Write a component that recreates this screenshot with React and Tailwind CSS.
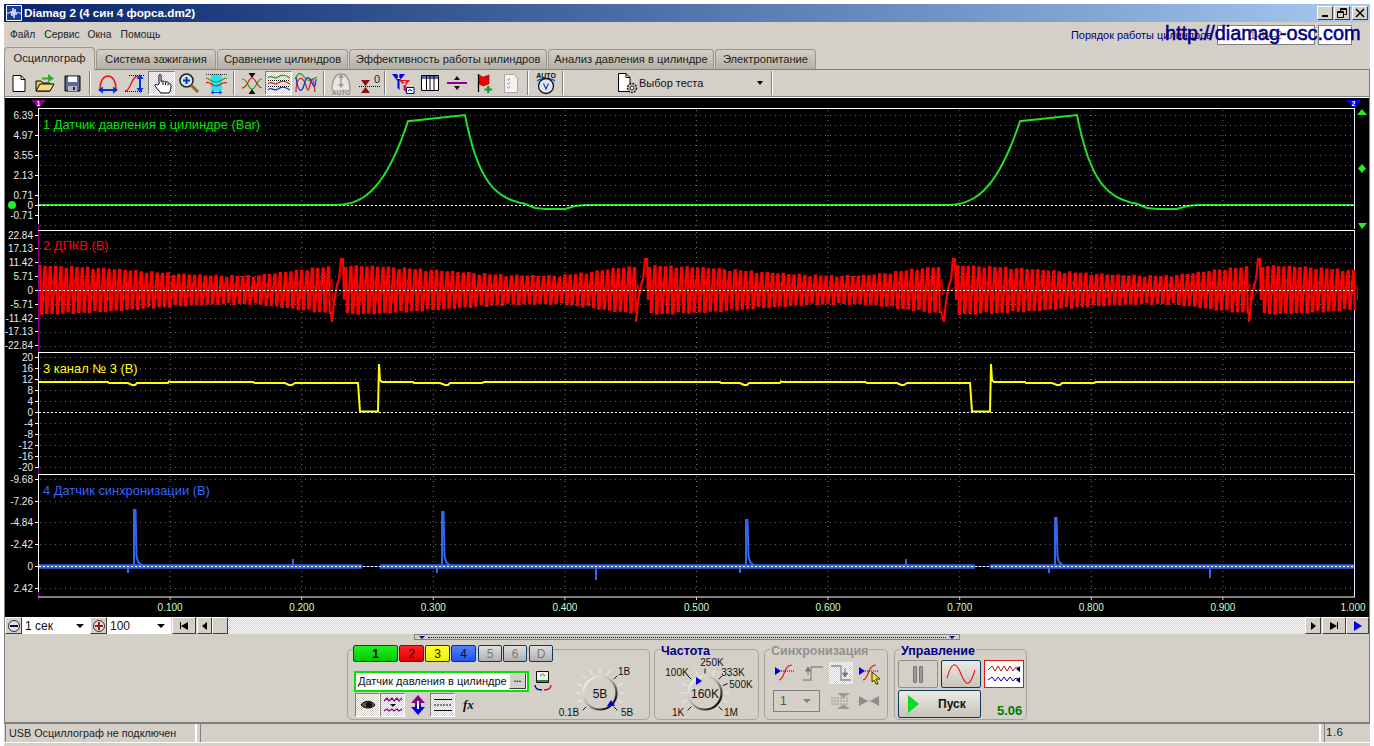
import clsx from 'clsx'

const raised = 'border border-t-white border-l-white border-r-[#404040] border-b-[#404040] bg-[#d4d0c8]'
const pressedBg = 'border border-t-[#808080] border-l-[#808080] border-r-white border-b-white bg-[repeating-conic-gradient(#ffffff_0_25%,#d4d0c8_0_50%)] bg-[length:2px_2px]'
const dither = 'bg-[repeating-conic-gradient(#ffffff_0_25%,#d4d0c8_0_50%)] bg-[length:2px_2px]'

const tabs = [
  { label: 'Осциллограф', w: 'w-[91px]', active: true },
  { label: 'Система зажигания', w: 'w-[120px]' },
  { label: 'Сравнение цилиндров', w: 'w-[131px]' },
  { label: 'Эффективность работы цилиндров', w: 'w-[198px]' },
  { label: 'Анализ давления в цилиндре', w: 'w-[166px]' },
  { label: 'Электропитание', w: 'w-[101px]' },
]

const range = (from, to, step) => {
  const out = []
  for (let v = from; v <= to + 0.01; v += step) out.push(v)
  return out
}

const panels = [
  {
    top: 108, bottom: 229, zero: 205, rows: range(115, 225, 10), color: '#00e600', title: '1 Датчик давления в цилиндре (Bar)', titleY: 129, axis: '#ffffff',
    ticks: [['6.39', 115], ['4.97', 135], ['3.55', 155], ['2.13', 175], ['0.71', 195], ['0', 205], ['-0.71', 215]],
  },
  {
    top: 230, bottom: 351, zero: 290, rows: range(234, 346, 14), color: '#ff0000', title: '2 ДПКВ (В)', titleY: 250, axis: '#8b008b',
    ticks: [['22.84', 235], ['17.13', 248], ['11.42', 262], ['5.71', 276], ['0', 290], ['-5.71', 304], ['-11.42', 318], ['-17.13', 331], ['-22.84', 345]],
  },
  {
    top: 352, bottom: 473, zero: 412, rows: range(357, 467, 11), color: '#ffff00', title: '3 канал № 3 (В)', titleY: 373, axis: '#ffffff',
    ticks: [['20', 357], ['16', 368], ['12', 379], ['8', 390], ['4', 401], ['0', 412], ['-4', 423], ['-8', 434], ['-12', 445], ['-16', 456], ['-20', 467]],
  },
  {
    top: 474, bottom: 597, zero: 566, rows: [479, 501, 522, 544, 588], color: '#3366ff', title: '4 Датчик синхронизации (В)', titleY: 495, axis: '#ffffff',
    ticks: [['-9.68', 479], ['-7.26', 501], ['-4.84', 522], ['-2.42', 544], ['0', 566], ['2.42', 588]],
  },
]

const gridX = range(0.1, 0.91, 0.1).map((t) => 38.5 + t * 1316)

// one compression hump, shifted by dx
function hump(dx) {
  const pts = []
  for (let x = 330; x <= 410; x += 3) pts.push([x + dx, 205 - 90 * ((x - 330) / 80) ** 2.8])
  pts.push([465 + dx, 115])
  for (let x = 467; x <= 525; x += 3) pts.push([x + dx, 115 + 92 * (1 - Math.exp(-(x - 465) / 18))])
  pts.push([535 + dx, 208], [545 + dx, 209], [565 + dx, 209], [575 + dx, 206], [585 + dx, 205])
  return pts
}
const pressurePts = [[39, 205], ...hump(0), ...hump(612), [1354, 205]].map(([a, b]) => `${a},${b.toFixed(1)}`).join(' ')

function buildCrank() {
  const events = [33, 338, 642, 950, 1255, 1560]
  const pts = []
  const inner = []
  let x = 39
  let i = 0
  while (x < 1354) {
    const next = events.find((e) => e > x)
    const prev = events[events.indexOf(next) - 1]
    if (next - x < 8) {
      pts.push([next - 6, 322], [next - 4, 302], [next - 1, 285], [next + 1, 280], [next + 3, 259], [next + 5, 259], [next + 6, 300])
      x = next + 7
      continue
    }
    const p = (x - prev) / 305
    let amp = p < 0.68 ? 13 + 10 * Math.cos((p / 0.68) * Math.PI / 2) ** 2 : 13 + 9 * Math.sin(((p - 0.68) / 0.32) * Math.PI / 2) ** 2
    amp += i % 3 === 0 ? 0.8 : i % 5 === 0 ? -1.2 : 0
    pts.push([x, 290 - amp], [x + 1.2, 290 - amp], [x + 1.8, 290 + amp], [x + 3, 290 + amp])
    inner.push([x + 4, 290 - amp * (i % 2 ? 0.25 : 0.5)], [x + 4.6, 290 + amp * (i % 3 ? 0.2 : 0.5)])
    x += 5.35
    i += 1
  }
  const fmt = (list) => list.map(([a, b]) => `${a.toFixed(1)},${b.toFixed(1)}`).join(' ')
  return { main: fmt(pts), inner: fmt(inner) }
}
const crank = buildCrank()

const supply = (dx) => [[dx + 108, 382], [dx + 109, 383], [dx + 128, 383], [dx + 132, 385], [dx + 135, 385], [dx + 137, 383], [dx + 168, 383], [dx + 169, 381.5], [dx + 171, 382], [dx + 253, 382], [dx + 255, 383], [dx + 285, 383], [dx + 289, 385], [dx + 292, 385], [dx + 295, 383], [dx + 358, 383], [dx + 360, 411.5], [dx + 378, 411.5], [dx + 379, 364], [dx + 380, 380], [dx + 382, 382], [dx + 413, 382], [dx + 414, 383], [dx + 440, 383], [dx + 445, 385], [dx + 448, 385], [dx + 450, 383], [dx + 482, 383], [dx + 484, 382]]
const supplyPts = [[39, 382], ...supply(0), ...supply(612).filter(([x]) => x < 1354), [1354, 382]].map((p) => p.join(',')).join(' ')

const spikes = [
  [135, 510], [443, 512], [747, 520], [1056, 518],
]
const smalls = [[128, 573], [437, 573], [596, 580], [740, 573], [1049, 573], [1210, 578], [293, 559], [906, 559]]

function Scope() {
  const cls = "font-['Liberation_Sans',sans-serif]"
  return (
    <svg width="1364" height="519" viewBox="5 98 1364 519" className={clsx('block bg-black', cls)}>
      {panels.map((pn) => (
        <g key={pn.title}>
          {pn.rows.map((y) => (
            <line key={y} x1="40" x2="1352" y1={y + 0.5} y2={y + 0.5} stroke="#666" strokeDasharray="1 4" />
          ))}
          {gridX.map((x) => (
            <line key={x} x1={x} x2={x} y1={pn.top + 2} y2={pn.bottom - 1} stroke="#777" strokeDasharray="1 4" />
          ))}
          {pn.ticks.map(([label, y]) => (
            <g key={label}>
              <line x1="35" x2="38" y1={y + 0.5} y2={y + 0.5} stroke="#fff" />
              <text x="33" y={y + 4} fontSize="10" fill="#e8e8e8" textAnchor="end">{label}</text>
            </g>
          ))}
          <line x1="38.5" x2="38.5" y1={pn.top} y2={pn.bottom} stroke={pn.axis} />
          <line x1="38.5" x2="38.5" y1={pn.bottom - 5} y2={pn.bottom + 2} stroke="#8b008b" />
          <line x1="1354.5" x2="1354.5" y1={pn.top} y2={pn.bottom} stroke="#e8e8ff" />
          <line x1="38" x2="1355" y1={pn.top + 0.5} y2={pn.top + 0.5} stroke="#fff" />
          <text x="43" y={pn.titleY} fontSize="12.9" fill={pn.color}>{pn.title}</text>
        </g>
      ))}
      <line x1="38" x2="1355" y1="597" y2="597" stroke="#fff" />

      <polyline points={pressurePts} fill="none" stroke="#22e022" strokeWidth="2" />
      <polyline points={crank.inner} fill="none" stroke="#ff0000" strokeWidth="1" />
      <polyline points={crank.main} fill="none" stroke="#ff0000" strokeWidth="2.2" />
      <polyline points={supplyPts} fill="none" stroke="#ffff00" strokeWidth="2" />

      <g stroke="#3366ee" fill="none">
        <path d="M39 566.5H362M380 566.5H975M990 566.5H1354" strokeWidth="4.5" />
        <path d="M362 566.5H380M975 566.5H990" strokeWidth="1" />
        {spikes.map(([x, y]) => (
          <path key={x} d={`M${x - 1} 566V${y}H${x + 0.5}L${x + 1.5} 556L${x + 3} 562L${x + 8} 566`} strokeWidth="2" />
        ))}
        {smalls.map(([x, y]) => (
          <path key={x} d={`M${x} 566V${y}`} strokeWidth="2" />
        ))}
      </g>

      {panels.map((pn) => (
        <line key={pn.zero} x1="39" x2="1354" y1={pn.zero + 0.5} y2={pn.zero + 0.5} stroke="#fff" strokeDasharray="2 2" />
      ))}

      {gridX.map((x, i) => (
        <g key={x}>
          <line x1={x} x2={x} y1="597" y2="600" stroke="#ccc" />
          <text x={x} y="611" fontSize="10" fill="#ccffcc" textAnchor="middle">{`0.${i + 1}00`}</text>
        </g>
      ))}
      <text x="1353" y="611" fontSize="10" fill="#ccffcc" textAnchor="middle">1.000</text>

      <path d="M31 100H46L39 108Z" fill="#8b008b" />
      <text x="38.5" y="105.5" fontSize="7" fontWeight="bold" fill="#fff" textAnchor="middle">1</text>
      <path d="M1346 100H1361L1354 108Z" fill="#0000ee" />
      <text x="1353.5" y="105.5" fontSize="7" fontWeight="bold" fill="#fff" textAnchor="middle">2</text>
      <circle cx="12" cy="205" r="4" fill="#22ee22" />
      <path d="M1357 115L1362 109L1367 115Z" fill="#22ee22" />
      <path d="M1362 164L1366 168.500L1362 173L1358 168.500Z" fill="#22ee22" />
      <path d="M1358 223H1367L1362 229Z" fill="#22ee22" />
    </svg>
  )
}

function Ico({ children, w = 24, h = 24 }) {
  return <svg width={w} height={h} viewBox={`0 0 ${w} ${h}`} fill="none">{children}</svg>
}

const IconNew = () => <Ico><path d="M7 4.500H15L19 8.500V20.500H7Z" fill="#fff" stroke="#000" /><path d="M15 4.500V8.500H19" stroke="#000" /></Ico>
const IconOpen = () => <Ico><path d="M3 10H8L10 12H17V20H3Z" fill="#e8c84a" stroke="#000" /><path d="M3 20L7 13H21L17 20Z" fill="#f5de7a" stroke="#000" /><path d="M15 3L21 7.500L15 11Z" fill="#2ea82e" /><path d="M9 7.500H15" stroke="#2ea82e" strokeWidth="2" /></Ico>
const IconSave = () => <Ico><path d="M5 5H20V20H5Z" fill="#5b6c9a" stroke="#000" /><path d="M8 5.500H17V11H8Z" fill="#fff" /><path d="M8 15H17V20H8Z" fill="#b9b9b9" /><path d="M13 16H15V19H13Z" fill="#222" /></Ico>
const IconSpread = () => <Ico><path d="M4 19C4 9 8 5 12 5S20 9 20 19" stroke="#ee1111" strokeWidth="1.500" /><path d="M4 19H20" stroke="#0033dd" strokeWidth="2" /><path d="M2 19L7 15.500V22.500ZM22 19L17 15.500V22.500Z" fill="#0033dd" /></Ico>
const IconStretch = () => <Ico><path d="M2 20C8 20 8 5 15 5" stroke="#ee1111" strokeWidth="1.300" /><path d="M6 4.500H22M2 20.500H20" stroke="#000" strokeDasharray="1 1" /><path d="M17 6V19" stroke="#0033dd" strokeWidth="2" /><path d="M17 3L13.500 8H20.500ZM17 22L13.500 17H20.500Z" fill="#0033dd" /></Ico>
const IconHand = () => <Ico><path d="M9 13V4.500C9 3 11 3 11 4.500V10.500L13 10C14 10 15 10.500 15 11L17 11C18 11 19 12 19 12.500L20.500 13C21.500 14 21 20 19 22H11C9 20 5.500 16 5 14.500C5 13 6.500 13 7.500 14Z" fill="#fff" stroke="#000" /><path d="M13 11V14M15.500 11.500V14M18 12.500V14.500" stroke="#000" /></Ico>
const IconZoom = () => <Ico><circle cx="9.500" cy="9.500" r="6.500" fill="#d6e6fa" stroke="#222" strokeWidth="1.500" /><path d="M14 14L21 21" stroke="#8a6a2a" strokeWidth="3" /><path d="M6 9.500H13M9.500 6V13" stroke="#0033cc" strokeWidth="2" /></Ico>
const IconZoomWave = () => <Ico><path d="M7 3H18V20H7Z" fill="#22e6ee" /><path d="M2 7C6 7 6 11 12 11S18 7 23 7" stroke="#17a017" strokeWidth="1.200" /><path d="M2 12C6 9 7 15 12 15S18 10 23 12" stroke="#ee1111" strokeWidth="1.200" /><path d="M2 3.500H23" stroke="#222" strokeDasharray="1 1" /><path d="M7 21.500H18" stroke="#0033dd" /><path d="M7 21.500L9.500 19.500V23.500ZM18 21.500L15.500 19.500V23.500Z" fill="#0033dd" /></Ico>
const IconCross = () => <Ico><path d="M2 8C8 8 8 18 12 18S17 8 22 8" stroke="#17a017" strokeWidth="1.200" /><path d="M2 17C8 17 8 7 12 7S17 17 22 17" stroke="#ee1111" strokeWidth="1.200" /><path d="M12 7L8.500 2H15.500ZM12 18L8.500 23H15.500Z" fill="#111" /></Ico>
const IconStack = () => <Ico><path d="M1 7C4 3 7 9 11 6S18 4 23 7" stroke="#17a017" strokeWidth="1.200" /><path d="M1 13C4 9 7 15 11 12S18 10 23 13" stroke="#ee1111" strokeWidth="1.200" /><path d="M1 19C4 15 7 21 11 18S18 16 23 19" stroke="#0033dd" strokeWidth="1.200" /><path d="M1 9.500H23M1 15.500H23" stroke="#000" strokeDasharray="1 1" /></Ico>
const IconOverlap = () => <Ico><path d="M1 8C5 0 7 2 11 7S18 8 23 6" stroke="#17a017" strokeWidth="1.200" /><path d="M2 21C2 6 8 4 11 12S14 22 16 14 19 4 21 21" stroke="#ee1111" strokeWidth="1.200" /><path d="M2 6C4 22 8 22 10 14S14 4 17 10 21 20 22 8" stroke="#0033dd" strokeWidth="1.200" /></Ico>
const IconAutoDome = () => <Ico><path d="M3 20C3 8 7 3 12 3S21 8 21 20" fill="#e8e5de" stroke="#9a9a9a" strokeWidth="1.300" /><path d="M12 5V15" stroke="#9a9a9a" strokeWidth="1.500" /><path d="M12 3L9 7H15ZM12 17L9 13H15Z" fill="#9a9a9a" /><text x="12" y="23.500" fontSize="6.500" fontWeight="bold" fill="#8a8a8a" textAnchor="middle">AUTO</text></Ico>
const IconZero = () => <Ico><path d="M3 15.500H25" stroke="#000" strokeDasharray="1 1" /><path d="M5 9H14L9.500 15ZM5 22H14L9.500 16Z" fill="#8b1010" /><text x="18" y="12" fontSize="11" fill="#222">0</text></Ico>
const IconFilter = () => <Ico><path d="M1 3H14L8.500 10V19L6.500 17V10Z" fill="#0000dd" /><path d="M8 9H19L15 14V21L12.500 19V14Z" fill="#ee1111" /><text x="7.500" y="8" fontSize="7" fontWeight="bold" fill="#fff" textAnchor="middle">1</text><text x="13.500" y="14" fontSize="6" fontWeight="bold" fill="#fff" textAnchor="middle">2</text><path d="M15.500 16.500H23V22.500H15.500Z" fill="#fff" stroke="#0000aa" /><path d="M17 20L19 18.500L21 20" stroke="#0000aa" /></Ico>
const IconTable = () => <Ico><path d="M3.500 4.500H20.500V19.500H3.500Z" fill="#fff" stroke="#000" /><path d="M4 5H20V8H4Z" fill="#5b6ca8" /><path d="M8.500 5V19M12 5V19M16 5V19" stroke="#000" /></Ico>
const IconDivider = () => <Ico><path d="M2 12H22" stroke="#8b008b" strokeWidth="2" /><path d="M12 5L9 9H15ZM12 19L9 15H15Z" fill="#111" /></Ico>
const IconFlag = () => <Ico><path d="M6.500 3V21" stroke="#000" strokeWidth="1.300" /><path d="M7 4L11 6L17 4V13L11 15L7 13Z" fill="#ee0000" stroke="#700" strokeWidth="0.500" /><path d="M12.500 18.500H20M16.250 15V22" stroke="#0a9a2a" strokeWidth="2.200" /></Ico>
const IconChecklist = () => <Ico><path d="M5.500 3.500H15L18.500 7V21.500H5.500Z" fill="#f3f2ee" stroke="#a8a8a8" /><path d="M8 8L9.500 9.500L11 7M8 12L9.500 13.500L11 11M8 16L9.500 17.500L11 15" stroke="#9a9a9a" /></Ico>
const IconAutoGauge = () => <Ico><text x="12" y="6.500" fontSize="7" fontWeight="bold" fill="#111" textAnchor="middle">AUTO</text><path d="M3 10C7 6.500 17 6.500 21 10" stroke="#0066dd" strokeWidth="1.500" /><circle cx="12" cy="15" r="7.500" fill="#dfe6ef" stroke="#111" strokeWidth="1.300" /><path d="M9.500 12.500L12 18L14.500 12.500" stroke="#0033cc" strokeWidth="1.100" /></Ico>
const IconTest = () => (
  <Ico w={26} h={24}>
    <path d="M3.500 2.500H11L15 6.500V20.500H3.500Z" fill="#fff" stroke="#000" />
    <path d="M11 2.500V6.500H15" stroke="#000" />
    <circle cx="17" cy="17" r="4.500" fill="#d4d0c8" stroke="#111" strokeWidth="1.500" strokeDasharray="2 1" />
    <circle cx="17" cy="17" r="2" fill="#fff" stroke="#111" />
  </Ico>
)

function Tb({ icon: I, pressed }) {
  return (
    <div className={clsx('w-[27px] h-[24px] flex items-center justify-center', pressed && pressedBg)}>
      <I />
    </div>
  )
}

const Sep = ({ cls }) => <div className={clsx('w-[2px] h-[24px] border-l border-l-[#808080] border-r border-r-white', cls)} />

function Toolbar() {
  return (
    <div className="flex items-center h-[27px] border-b border-b-[#808080] pl-0 -ml-[1px]">
      <Tb icon={IconNew} />
      <Tb icon={IconOpen} />
      <Tb icon={IconSave} />
      <Sep cls="ml-[4px] mr-[3px]" />
      <Tb icon={IconSpread} />
      <Tb icon={IconStretch} />
      <Tb icon={IconHand} pressed />
      <Tb icon={IconZoom} />
      <Tb icon={IconZoomWave} />
      <Sep cls="ml-[4px] mr-[3px]" />
      <Tb icon={IconCross} />
      <Tb icon={IconStack} pressed />
      <Tb icon={IconOverlap} />
      <Sep cls="ml-[4px] mr-[2px]" />
      <Tb icon={IconAutoDome} />
      <Tb icon={IconZero} />
      <Sep cls="ml-[3px] mr-[3px]" />
      <Tb icon={IconFilter} />
      <Tb icon={IconTable} />
      <Tb icon={IconDivider} />
      <Tb icon={IconFlag} />
      <Tb icon={IconChecklist} />
      <Sep cls="ml-[3px] mr-[3px]" />
      <Tb icon={IconAutoGauge} />
      <Sep cls="ml-[3px]" />
      <div className="w-[207px] h-[24px] flex items-center pl-[51px] pr-[8px] text-[11px] text-[#111]">
        <IconTest />
        <span className="-ml-[2px]">Выбор теста</span>
        <span className="ml-auto w-0 h-0 border-x-[3.5px] border-x-transparent border-t-[4px] border-t-black" />
      </div>
      <Sep />
    </div>
  )
}

const Arrow = ({ dir = 'r', cls = 'border-l-black', size = 'border-y-[4px] border-l-[5px]' }) => (
  <span className={clsx('w-0 h-0 border-y-transparent', size, cls, dir === 'l' && 'rotate-180')} />
)

function Combo({ w, text }) {
  return (
    <div className={clsx('h-[17px] bg-white flex items-center pl-[3px] pr-[6px] text-[12px] text-[#111]', w)}>
      <span>{text}</span>
      <span className="ml-auto w-0 h-0 border-x-[4px] border-x-transparent border-t-[4px] border-t-black" />
    </div>
  )
}

function RoundBtn({ sign }) {
  return (
    <div className={clsx('w-[17px] h-[17px] flex items-center justify-center', raised)}>
      <span className="w-[12px] h-[12px] rounded-full border border-[#333] bg-[#e4e0d8] flex items-center justify-center relative">
        <span className={clsx('absolute w-[8px] h-[2px]', sign === '+' ? 'bg-[#a01818]' : 'bg-[#000080]')} />
        {sign === '+' && <span className="absolute w-[2px] h-[8px] bg-[#a01818]" />}
      </span>
    </div>
  )
}

function ScrollRow() {
  return (
    <div className="flex h-[17px]">
      <RoundBtn sign="-" />
      <Combo w="w-[68px]" text="1 сек" />
      <RoundBtn sign="+" />
      <Combo w="w-[64px]" text="100" />
      <div className={clsx('ml-[1px] w-[24px] flex items-center justify-center', raised)}>
        <span className="w-[1px] h-[7px] bg-black" />
        <Arrow dir="l" size="border-y-[4px] border-l-[7px]" />
      </div>
      <div className={clsx('ml-[1px] w-[15px] flex items-center justify-center', raised)}><Arrow dir="l" /></div>
      <div className={clsx('w-[16px]', raised)} />
      <div className={clsx('flex-1', dither)} />
      <div className={clsx('w-[16px] flex items-center justify-center', raised)}><Arrow /></div>
      <div className={clsx('ml-[1px] w-[24px] flex items-center justify-center', raised)}>
        <Arrow size="border-y-[4px] border-l-[7px]" />
        <span className="w-[1px] h-[7px] bg-black" />
      </div>
      <div className={clsx('w-[23px] flex items-center justify-center border-l border-l-[#000080]', raised)}>
        <Arrow cls="border-l-[#0000ee]" size="border-y-[5px] border-l-[8px]" />
      </div>
    </div>
  )
}

function Knob({ id, cx, cy, w, h, labels, marker, value, dark }) {
  const r = 16.5
  const ticks = range(-225, 45, 22.5)
  return (
    <svg width={w} height={h} viewBox={`0 0 ${w} ${h}`} className="font-['Liberation_Sans',sans-serif] shrink-0">
      <defs>
        <linearGradient id={id} x1="0" y1="0" x2="1" y2="1">
          <stop offset="0.1" stopColor="#f4f4f4" />
          <stop offset="0.5" stopColor="#aaa" />
          <stop offset="0.85" stopColor="#111" />
        </linearGradient>
      </defs>
      {ticks.map((a) => {
        const rad = (a * Math.PI) / 180
        const bold = dark.includes(a)
        return (
          <line
            key={a}
            x1={cx + Math.cos(rad) * (r + 3)}
            y1={cy + Math.sin(rad) * (r + 3)}
            x2={cx + Math.cos(rad) * (r + 8)}
            y2={cy + Math.sin(rad) * (r + 8)}
            stroke={bold ? '#111' : '#f2f0ea'}
          />
        )
      })}
      <circle cx={cx} cy={cy} r={r} stroke={`url(#${id})`} strokeWidth="2.200" fill="#d4d0c8" />
      <text x={cx} y={cy + 4.500} fontSize="12" fill="#111" textAnchor="middle">{value}</text>
      <path d={marker} fill="#0000dd" />
      {labels.map(([t, x, y]) => (
        <text key={t} x={x} y={y} fontSize="10" fill="#111" textAnchor="middle">{t}</text>
      ))}
    </svg>
  )
}

const chans = [
  { n: '1', w: 'w-[47px]', c: 'from-[#22ee22] to-[#00c800]', t: 'text-black font-bold' },
  { n: '2', w: 'w-[26px]', c: 'from-[#ff2020] to-[#e00000]', t: 'text-[#111]' },
  { n: '3', w: 'w-[26px]', c: 'from-[#ffff30] to-[#eeee00]', t: 'text-[#111]' },
  { n: '4', w: 'w-[26px]', c: 'from-[#5080ff] to-[#2255ee]', t: 'text-[#111]' },
  { n: '5', w: 'w-[25px] ml-[1px]', c: 'from-[#e0e0e0] to-[#b0b0b0]', t: 'text-[#777]' },
  { n: '6', w: 'w-[25px]', c: 'from-[#e0e0e0] to-[#b0b0b0]', t: 'text-[#777]' },
  { n: 'D', w: 'w-[25px] ml-[1px]', c: 'from-[#e0e0e0] to-[#b0b0b0]', t: 'text-[#777]' },
]

function ChannelGroup() {
  return (
    <div className="w-[303px] h-[71px] border border-[#a8a49c] rounded-[5px] flex">
      <div className="w-[205px]">
        <div className="flex gap-[1px] -mt-[5px] ml-[5px]">
          {chans.map((c) => (
            <div key={c.n} className={clsx('h-[17px] border border-[#0a3a60] rounded-[2px] bg-linear-to-b flex items-center justify-center text-[12px]', c.w, c.c, c.t)}>
              {c.n}
            </div>
          ))}
        </div>
        <div className="flex items-center mt-[8px] ml-[6px]">
          <div className="w-[177px] h-[21px] border-2 border-[#00e600] bg-white flex items-center pl-[2px] pr-[1px] text-[11px] text-[#111] whitespace-nowrap">
            <span>Датчик давления в цилиндре</span>
            <span className={clsx('ml-auto w-[17px] h-[16px] flex items-center justify-center text-[9px] font-bold leading-none pb-[3px]', raised)}>...</span>
          </div>
          <div className="ml-[4px]">
            <Ico w={20} h={22}>
              <path d="M3.500 1.500H15.500V12.500H3.500Z" fill="#f4f2ec" stroke="#111" />
              <path d="M4 10H15V12H4Z" fill="#2a8a2a" />
              <path d="M7 6L9.500 4L12 6" stroke="#555" />
              <path d="M2 15C2 19 5 20 9 20" stroke="#000080" strokeWidth="1.300" />
              <path d="M18 15C18 19 15 20 11 20" stroke="#dd0000" strokeWidth="1.300" />
            </Ico>
          </div>
        </div>
        <div className="flex items-center mt-[1px] ml-[7px]">
          <div className={clsx('w-[25px] h-[24px] flex items-center justify-center', pressedBg)}>
            <Ico w={16} h={12}><path d="M1 6C4 1 12 1 15 6C12 10 4 10 1 6Z" fill="#555" stroke="#111" /><circle cx="9" cy="6" r="3" fill="#111" /></Ico>
          </div>
          <div className={clsx('w-[25px] h-[24px] flex items-center justify-center', pressedBg)}>
            <Ico w={20} h={20}>
              <path d="M1 6L4 3L6 6L9 3L11 6L14 3L16 6L19 3" stroke="#8b008b" strokeWidth="1.300" />
              <path d="M1 16L4 14L6 16L9 14L11 16L14 14L16 16L19 14" stroke="#8b008b" strokeWidth="1.300" />
              <path d="M7 9H13L10 12Z" fill="#111" />
            </Ico>
          </div>
          <div className="ml-[3px] w-[19px] flex justify-center">
            <Ico w={16} h={22}>
              <path d="M8 1L1 9H5V11H11V9H15Z" fill="#8b008b" />
              <path d="M8 21L1 13H5V11H11V13H15Z" fill="#0000ee" />
              <path d="M7 7V15H9V7Z" fill="#fff" />
            </Ico>
          </div>
          <div className={clsx('ml-[3px] w-[25px] h-[24px] flex items-center justify-center', pressedBg)}>
            <Ico w={20} h={14}><path d="M1 1.500H19M1 12.500H19" stroke="#111" /><path d="M1 7H19" stroke="#111" strokeDasharray="2 1" /></Ico>
          </div>
          <span className="ml-[8px] font-['Liberation_Serif',serif] italic font-bold text-[13px] text-[#111]">fx</span>
        </div>
      </div>
      <div className="-mt-[2px] -ml-[3px]">
        <Knob id="kv" cx={50} cy={45} w={96} h={72} value="5В" marker="M57 58L61 52L65 58Z" dark={[-225, -45, 45]}
          labels={[['1В', 74, 27], ['0.1В', 19, 68], ['5В', 77, 68]]} />
      </div>
    </div>
  )
}

function Group({ title, grey, w, children }) {
  return (
    <div className={clsx('relative h-[71px] border border-[#a8a49c] rounded-[5px]', w)}>
      <span className={clsx('absolute -top-[6px] left-[5px] px-[1px] bg-[#d4d0c8] text-[12.500px] font-bold leading-[14px]', grey ? 'text-[#909090]' : 'text-[#000080]')}>{title}</span>
      {children}
    </div>
  )
}

function SyncGroup() {
  const wave = (
    <Ico w={24} h={20}>
      <path d="M6 17C12 17 10 2 19 2" stroke="#ee1111" strokeWidth="1.200" />
      <path d="M8 8H22" stroke="#0000dd" strokeDasharray="1 1" />
      <path d="M2 4L8 8L2 12Z" fill="#0000dd" />
    </Ico>
  )
  return (
    <div className="flex flex-col pl-[8px] pt-[11px]">
      <div className="flex items-center h-[24px]">
        <div className="w-[24px] flex justify-center">{wave}</div>
        <div className="ml-[4px] w-[24px] flex justify-center">
          <Ico w={22} h={20}><path d="M1 17H9V4H21" stroke="#8a8a8a" strokeWidth="1.300" /><path d="M6 12V7M6 4L3.500 8H8.500Z" stroke="#777" fill="#777" /></Ico>
        </div>
        <div className={clsx('ml-[4px] w-[24px] h-[22px] flex items-center justify-center', dither)}>
          <Ico w={22} h={20}><path d="M1 3H11V17H21" stroke="#8a8a8a" strokeWidth="1.300" /><path d="M15 5V11M15 14L12.500 10H17.500Z" stroke="#777" fill="#777" /></Ico>
        </div>
        <div className="ml-[4px] w-[24px] flex justify-center relative">
          {wave}
          <span className="absolute left-[14px] top-[8px]">
            <Ico w={11} h={14}><path d="M1 1L9 8H5L7 13L5 13L3 9L1 11Z" fill="#ffe000" stroke="#111" strokeWidth="0.800" /></Ico>
          </span>
        </div>
      </div>
      <div className="flex items-center mt-[5px]">
        <div className="w-[47px] h-[22px] border border-[#808080] flex items-center pl-[6px] pr-[8px] text-[12px] text-[#555]">
          <span>1</span>
          <span className="ml-auto w-0 h-0 border-x-[4px] border-x-transparent border-t-[4px] border-t-[#808080]" />
        </div>
        <div className="ml-[10px]">
          <Ico w={24} h={22}>
            <path d="M1 8H18M1 11H18M1 14H18" stroke="#909090" strokeDasharray="2 1" />
            <path d="M7 3H20L13.500 8ZM7 19H20L13.500 14Z" fill="#9a9a9a" />
          </Ico>
        </div>
        <div className="ml-[3px]">
          <Ico w={24} h={16}><path d="M1 8H23" stroke="#b0b0b0" /><path d="M2 3L11 8L2 13ZM22 3L13 8L22 13Z" fill="#8e8e8e" /></Ico>
        </div>
      </div>
    </div>
  )
}

function ControlGroup() {
  return (
    <div className="pl-[3px] pt-[10px]">
      <div className="flex gap-[3px]">
        <div className="w-[40px] h-[28px] border border-[#909090] rounded-[2px] flex items-center justify-center gap-[2px] bg-[#d4d0c8]">
          <span className="w-[4px] h-[17px] bg-[#9a9a9a] border border-[#777] rounded-[1px]" />
          <span className="w-[4px] h-[17px] bg-[#9a9a9a] border border-[#777] rounded-[1px]" />
        </div>
        <div className="w-[40px] h-[28px] border border-[#0a3a60] rounded-[2px] flex items-center justify-center bg-linear-to-b from-[#ece9e2] to-[#c8c4bc]">
          <Ico w={32} h={22}><path d="M2 15C7 -2 11 -2 16 11S25 24 30 7" stroke="#ee1111" strokeWidth="1.100" /></Ico>
        </div>
        <div className="w-[40px] h-[28px] border border-[#ee1111] flex items-center justify-center bg-white">
          <Ico w={36} h={24}>
            <path d="M2 8L6 4L9 9L12 4L15 9L18 4L21 9L24 4L27 9L30 5L34 7" stroke="#cc1111" />
            <path d="M2 18L6 15L9 19L12 15L15 19L18 15L21 19L24 15L27 19L30 16L34 18" stroke="#0000cc" />
            <path d="M30 7L34 4V10ZM30 18L34 15V21Z" fill="#000080" />
          </Ico>
        </div>
      </div>
      <div className="flex mt-[2px]">
        <div className="w-[83px] h-[28px] border border-[#0a3a60] rounded-[2px] flex items-center bg-linear-to-b from-[#ece9e2] to-[#c8c4bc] pl-[9px]">
          <span className="w-0 h-0 border-y-[9px] border-y-transparent border-l-[11px] border-l-[#00dd22]" />
          <span className="ml-[19px] text-[12px] font-bold text-[#111]">Пуск</span>
        </div>
        <span className="ml-[16px] mt-[14px] text-[13px] font-bold leading-[14px] text-[#007a00]">5.06</span>
      </div>
    </div>
  )
}

function Lower() {
  return (
    <div className="h-[88px]">
      <div className="ml-[409px] w-[546px] h-[6px] border border-[#808080] flex items-center justify-between px-[4px]">
        <span className="w-0 h-0 border-x-[3px] border-x-transparent border-t-[3px] border-t-[#000080]" />
        <span className="flex-1 mx-[3px] border-t border-dotted border-t-[#000080]" />
        <span className="w-0 h-0 border-x-[3px] border-x-transparent border-t-[3px] border-t-[#000080]" />
      </div>
      <div className="flex mt-[9px] pl-[342px]">
        <ChannelGroup />
        <Group title="Частота" w="w-[105px] ml-[4px]">
          <div className="-mt-[1px]">
            <Knob id="kf" cx={50} cy={44} w={103} h={70} value="160K" marker="M41 28L47 32L41 36Z" dark={[-225, -135, -90, -45, -22.5, 45]}
              labels={[['100K', 22, 27], ['250K', 57, 17], ['333K', 78, 27], ['500K', 86, 39], ['1K', 23, 67], ['1M', 76, 67]]} />
          </div>
        </Group>
        <Group title="Синхронизация" grey w="w-[124px] ml-[5px]"><SyncGroup /></Group>
        <Group title="Управление" w="w-[133px] ml-[6px]"><ControlGroup /></Group>
      </div>
    </div>
  )
}

export default function App() {
  return (
    <div className="w-[1374px] h-[746px] overflow-hidden bg-white pt-[4px] font-['Liberation_Sans',sans-serif] text-black relative">
      <div className="ml-[4px] w-[1366px] h-[742px] bg-[#d4d0c8] flex flex-col">
        {/* Title bar */}
        <div className="h-[18px] bg-linear-to-r from-[#0a246a] to-[#a6caf0] flex items-center pl-[2px] pr-[2px]">
          <Ico w={16} h={16}>
            <path d="M0.500 0.500H15.500V15.500H0.500Z" fill="#1a3a9a" stroke="#fff" />
            <path d="M1 8H4L5 6L6 11L7 3L8 13L9 4L10 10L11 7L12 8H15" stroke="#dfe8ff" />
          </Ico>
          <span className="ml-[2px] text-white font-bold text-[11.700px] leading-none">Diamag 2 (4 син 4 форса.dm2)</span>
          <div className="ml-auto flex">
            <div className={clsx('w-[16px] h-[14px] flex items-end justify-center pb-[2px]', raised)}><span className="w-[6px] h-[2px] bg-black" /></div>
            <div className={clsx('ml-[1px] w-[16px] h-[14px] flex items-center justify-center', raised)}>
              <Ico w={10} h={10}><path d="M3.500 0.500H9.500V6.500H7.500M3.500 1.500H9.500" stroke="#000" /><path d="M3.500 0.500V3" stroke="#000" /><path d="M0.500 3.500H6.500V9.500H0.500Z M0.500 4.500H6.500" stroke="#000" /></Ico>
            </div>
            <div className={clsx('ml-[2px] w-[16px] h-[14px] flex items-center justify-center', raised)}>
              <Ico w={10} h={10}><path d="M1 1L9 9M9 1L1 9" stroke="#000" strokeWidth="1.500" /></Ico>
            </div>
          </div>
        </div>

        {/* Menu */}
        <div className="h-[26px] flex items-center text-[10.300px] text-[#222] pl-[6px] pr-[18px]">
          <span>Файл</span>
          <span className="ml-[9px]">Сервис</span>
          <span className="ml-[8px]">Окна</span>
          <span className="ml-[9px]">Помощь</span>
          <span className="ml-auto text-[#000080] text-[10.900px]">Порядок работы цилиндров</span>
          <div className="ml-[5px] w-[98px] h-[20px] bg-white border border-[#808080] flex items-center justify-center text-[#666] text-[10px]">1-3-4-2</div>
          <div className="ml-[3px] w-[34px] h-[20px] bg-white border border-[#808080]" />
        </div>

        {/* Tabs */}
        <div className="h-[21px] flex items-end gap-[1px] relative z-10">
          {tabs.map((t) => (
            <div
              key={t.label}
              className={clsx(
                'flex items-center justify-center text-[11.200px] text-[#222] border border-[#9a968e] border-b-0 rounded-t-[4px]',
                t.w,
                t.active ? 'h-[23px] -mb-[1px] bg-[#d4d0c8] pb-[2px]' : 'h-[20px] bg-linear-to-b from-[#d4d0c8] to-[#b4b0a6]'
              )}
            >
              {t.label}
            </div>
          ))}
        </div>

        {/* Main frame */}
        <div className="h-[653px] border-x border-x-[#808080] border-t border-t-[#808080] flex flex-col">
          <Toolbar />
          <div className="h-[1px] bg-white" />
          <Scope />
          <ScrollRow />
          <Lower />
        </div>

        {/* Status bar */}
        <div className="border-t-2 border-t-[#808080] h-[20px] flex gap-[3px] pl-[1px] text-[10.800px] text-[#222] shrink-0">
          <div className="w-[192px] h-[18px] border-l border-l-[#808080] border-r-2 border-r-white flex items-center pl-[3px]">USB Осциллограф не подключен</div>
          <div className="flex-1 h-[18px] border-l border-l-[#808080] border-r-2 border-r-white" />
          <div className="w-[46px] h-[18px] border-l border-l-[#808080] flex items-center pl-[1px] text-[11.500px] tracking-[0.5px]">1.6</div>
        </div>
        <div className="flex-1 border-t border-t-white" />
      </div>
      <div className="absolute left-[1165px] top-[19px] text-[19.900px] leading-[28px] text-[#000080] [-webkit-text-stroke:0.5px_#000080] whitespace-nowrap">
        http://diamag-osc.com
      </div>
    </div>
  )
}
